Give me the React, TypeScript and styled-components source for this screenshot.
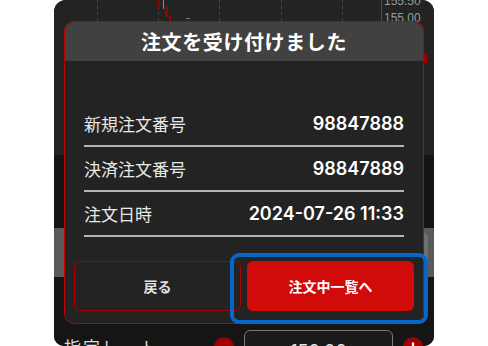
import React from "react";
import styled, { createGlobalStyle } from "styled-components";

const Global = createGlobalStyle`
  html, body { margin: 0; padding: 0; background: #ffffff; }
  body { width: 488px; height: 346px; overflow: hidden; font-family: "Noto Sans CJK JP", "Noto Sans", sans-serif; }
  #root { width: 488px; height: 346px; }
`;

const Stage = styled.div`
  position: relative;
  width: 488px;
  height: 346px;
  display: flex;
  justify-content: flex-start;
  padding-left: 54px;
  box-sizing: border-box;
`;

const Phone = styled.div`
  position: relative;
  width: 380px;
  height: 346px;
  border-radius: 12px 12px 10px 10px;
  overflow: hidden;
  display: flex;
  flex-direction: column;
  background: #151515;
`;

const ChartArea = styled.div`
  height: 155px;
  background: #232323;
  flex: none;
`;

const DarkBand = styled.div`
  height: 73px;
  background: #141414;
  flex: none;
  display: flex;
  align-items: center;
  justify-content: flex-end;
  padding-right: 10px;
`;

const GrayBand = styled.div`
  height: 49px;
  background: #5a5a5a;
  flex: none;
  display: flex;
  align-items: center;
  justify-content: flex-end;
  padding-right: 6px;
`;

const GrayKey = styled.div`
  width: 20px;
  height: 42px;
  border-radius: 6px;
  background: #707070;
`;

const Circle = styled.div<{ $size?: number }>`
  width: ${(p) => p.$size ?? 20}px;
  height: ${(p) => p.$size ?? 20}px;
  border-radius: 50%;
  background: #9c0000;
  flex: none;
  display: flex;
  align-items: center;
  justify-content: center;
  color: #fff;
  font-family: "Liberation Sans", sans-serif;
  font-weight: 700;
  font-size: 18px;
  line-height: 1;
`;

const BottomArea = styled.div`
  flex: 1;
  background: #151515;
  display: flex;
  align-items: flex-start;
  padding: 53px 11px 0 10px;
`;

const RateLabel = styled.div`
  width: 150px;
  padding-top: 7px;
  color: #dcdcdc;
  font-size: 17px;
  line-height: 20px;
  white-space: nowrap;
  letter-spacing: 2px;
`;

const RateGroup = styled.div`
  display: flex;
  align-items: flex-start;
  gap: 10px;
  margin-left: auto;
`;

const RateInput = styled.div`
  width: 149px;
  height: 40px;
  box-sizing: border-box;
  border: 1px solid #7a7a7a;
  border-radius: 6px;
  background: #1b1b1b;
  color: #e6e6e6;
  font-family: "Inter", sans-serif;
  font-size: 18px;
  text-align: center;
  padding-top: 10px;
`;

const StepCircle = styled(Circle)`
  margin-top: 7px;
`;

const Modal = styled.div`
  position: absolute;
  left: 10px;
  top: 21px;
  width: 360px;
  height: 303px;
  box-sizing: border-box;
  border: 1px solid #bf0000;
  border-radius: 10px;
  background: #232323;
  overflow: hidden;
  display: flex;
  flex-direction: column;
`;

const ModalHeader = styled.div`
  height: 39px;
  background: #414141;
  flex: none;
  display: flex;
  align-items: center;
  justify-content: center;
  color: #ffffff;
  font-weight: 700;
  font-size: 20px;
  letter-spacing: 0.6px;
`;

const InfoList = styled.div`
  padding: 41px 19px 0 19px;
  display: flex;
  flex-direction: column;
`;

const InfoRow = styled.div`
  height: 43px;
  display: flex;
  align-items: center;
  justify-content: space-between;
  border-bottom: 2px solid #b4b4b4;
  flex: none;
`;

const Label = styled.span`
  color: #e8e8e8;
  font-size: 17px;
  font-weight: 400;
`;

const Value = styled.span`
  color: #ffffff;
  font-family: "Inter", "Noto Sans", sans-serif;
  font-size: 18px;
  font-weight: 600;
`;

const ButtonRow = styled.div`
  display: flex;
  gap: 6px;
  padding: 24px 9px 0 9px;
`;

const Button = styled.div<{ $primary?: boolean }>`
  width: 167px;
  height: 50px;
  box-sizing: border-box;
  border-radius: 6px;
  display: flex;
  align-items: center;
  justify-content: center;
  font-size: 14px;
  font-weight: 700;
  color: ${(p) => (p.$primary ? "#ffffff" : "#e2e2e2")};
  background: ${(p) => (p.$primary ? "#d10a0a" : "#232323")};
  border: ${(p) => (p.$primary ? "none" : "1px solid #a80000")};
`;

const Highlight = styled.div`
  position: absolute;
  left: 230px;
  top: 253px;
  width: 198px;
  height: 71px;
  box-sizing: border-box;
  border: 4px solid #0767c9;
  border-radius: 9px;
  pointer-events: none;
`;

const EdgeMark = styled.div`
  position: absolute;
  left: 424px;
  top: 53px;
  width: 3px;
  height: 10px;
  background: #a00000;
`;

const Chart = () => {
  const xs = [43, 104, 165, 227, 288];
  return (
    <svg width="380" height="155" viewBox="0 0 380 155">
      {xs.map((x) => (
        <line key={x} x1={x + 0.5} y1={0} x2={x + 0.5} y2={155} stroke="#4a4a4a" strokeDasharray="3 3" />
      ))}
      <line x1={327.5} y1={0} x2={327.5} y2={155} stroke="#4d4d4d" />
      <rect x={103} y={0} width={3} height={10} fill="#8a0000" />
      <line x1={109.5} y1={0} x2={109.5} y2={9} stroke="#8c8c8c" />
      <rect x={111} y={7} width={3} height={10} fill="#a00000" />
      <rect x={115} y={15} width={2} height={6} fill="#a00000" />
      <rect x={132} y={18} width={4} height={1} fill="#777" />
      <text x={330} y={5} fill="#9a9a9a" fontSize="12" fontFamily="Liberation Sans, sans-serif">155.50</text>
      <text x={330} y={22} fill="#9a9a9a" fontSize="12" fontFamily="Liberation Sans, sans-serif">155.00</text>
    </svg>
  );
};

export default function App() {
  return (
    <>
      <Global />
      <Stage>
        <Phone>
          <ChartArea>
            <Chart />
          </ChartArea>
          <DarkBand>
            <Circle $size={20} />
          </DarkBand>
          <GrayBand>
            <GrayKey />
          </GrayBand>
          <BottomArea>
            <RateLabel>指定レート</RateLabel>
            <RateGroup>
              <StepCircle $size={20}>−</StepCircle>
              <RateInput>150.00</RateInput>
              <StepCircle $size={20}>+</StepCircle>
            </RateGroup>
          </BottomArea>
          <Modal>
            <ModalHeader>注文を受け付けました</ModalHeader>
            <InfoList>
              <InfoRow>
                <Label>新規注文番号</Label>
                <Value>98847888</Value>
              </InfoRow>
              <InfoRow>
                <Label>決済注文番号</Label>
                <Value>98847889</Value>
              </InfoRow>
              <InfoRow>
                <Label>注文日時</Label>
                <Value>2024-07-26 11:33</Value>
              </InfoRow>
            </InfoList>
            <ButtonRow>
              <Button>戻る</Button>
              <Button $primary>注文中一覧へ</Button>
            </ButtonRow>
          </Modal>
        </Phone>
        <EdgeMark />
        <Highlight />
      </Stage>
    </>
  );
}
